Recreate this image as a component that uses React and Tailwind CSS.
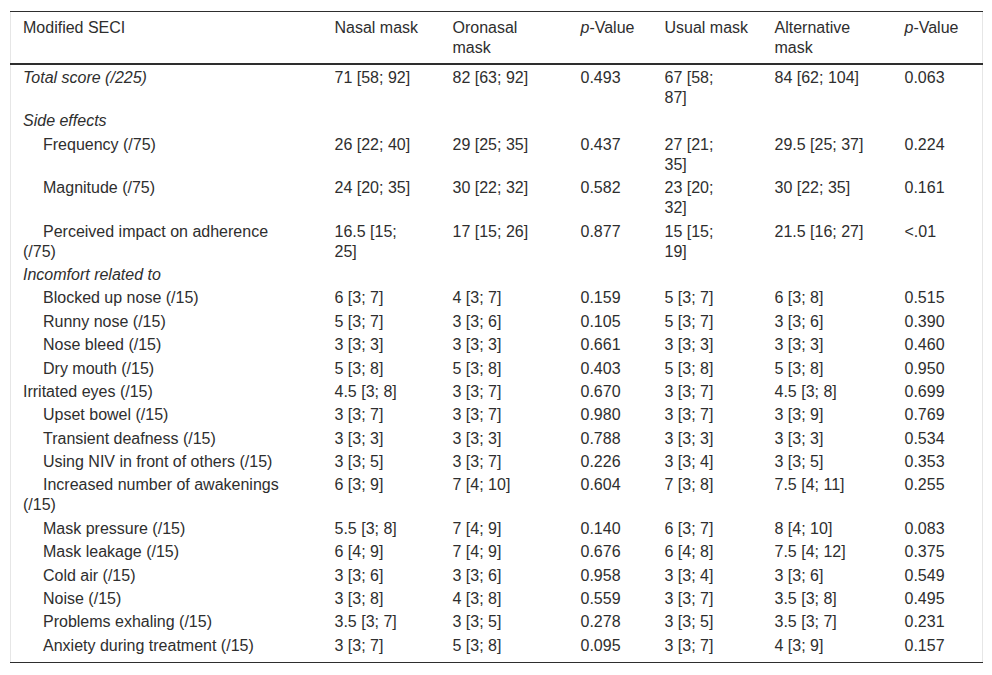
import React from "react";

const rows = [
  { label: "Total score (/225)", italic: true, v: ["71 [58; 92]", "82 [63; 92]", "0.493", "67 [58; 87]", "84 [62; 104]", "0.063"] },
  { label: "Side effects", italic: true, v: ["", "", "", "", "", ""] },
  { label: "Frequency (/75)", sub: true, v: ["26 [22; 40]", "29 [25; 35]", "0.437", "27 [21; 35]", "29.5 [25; 37]", "0.224"] },
  { label: "Magnitude (/75)", sub: true, v: ["24 [20; 35]", "30 [22; 32]", "0.582", "23 [20; 32]", "30 [22; 35]", "0.161"] },
  { label: "Perceived impact on adherence (/75)", sub: true, v: ["16.5 [15; 25]", "17 [15; 26]", "0.877", "15 [15; 19]", "21.5 [16; 27]", "<.01"] },
  { label: "Incomfort related to", italic: true, v: ["", "", "", "", "", ""] },
  { label: "Blocked up nose (/15)", sub: true, v: ["6 [3; 7]", "4 [3; 7]", "0.159", "5 [3; 7]", "6 [3; 8]", "0.515"] },
  { label: "Runny nose (/15)", sub: true, v: ["5 [3; 7]", "3 [3; 6]", "0.105", "5 [3; 7]", "3 [3; 6]", "0.390"] },
  { label: "Nose bleed (/15)", sub: true, v: ["3 [3; 3]", "3 [3; 3]", "0.661", "3 [3; 3]", "3 [3; 3]", "0.460"] },
  { label: "Dry mouth (/15)", sub: true, v: ["5 [3; 8]", "5 [3; 8]", "0.403", "5 [3; 8]", "5 [3; 8]", "0.950"] },
  { label: "Irritated eyes (/15)", v: ["4.5 [3; 8]", "3 [3; 7]", "0.670", "3 [3; 7]", "4.5 [3; 8]", "0.699"] },
  { label: "Upset bowel (/15)", sub: true, v: ["3 [3; 7]", "3 [3; 7]", "0.980", "3 [3; 7]", "3 [3; 9]", "0.769"] },
  { label: "Transient deafness (/15)", sub: true, v: ["3 [3; 3]", "3 [3; 3]", "0.788", "3 [3; 3]", "3 [3; 3]", "0.534"] },
  { label: "Using NIV in front of others (/15)", sub: true, v: ["3 [3; 5]", "3 [3; 7]", "0.226", "3 [3; 4]", "3 [3; 5]", "0.353"] },
  { label: "Increased number of awakenings (/15)", sub: true, v: ["6 [3; 9]", "7 [4; 10]", "0.604", "7 [3; 8]", "7.5 [4; 11]", "0.255"] },
  { label: "Mask pressure (/15)", sub: true, v: ["5.5 [3; 8]", "7 [4; 9]", "0.140", "6 [3; 7]", "8 [4; 10]", "0.083"] },
  { label: "Mask leakage (/15)", sub: true, v: ["6 [4; 9]", "7 [4; 9]", "0.676", "6 [4; 8]", "7.5 [4; 12]", "0.375"] },
  { label: "Cold air (/15)", sub: true, v: ["3 [3; 6]", "3 [3; 6]", "0.958", "3 [3; 4]", "3 [3; 6]", "0.549"] },
  { label: "Noise (/15)", sub: true, v: ["3 [3; 8]", "4 [3; 8]", "0.559", "3 [3; 7]", "3.5 [3; 8]", "0.495"] },
  { label: "Problems exhaling (/15)", sub: true, v: ["3.5 [3; 7]", "3 [3; 5]", "0.278", "3 [3; 5]", "3.5 [3; 7]", "0.231"] },
  { label: "Anxiety during treatment (/15)", sub: true, v: ["3 [3; 7]", "5 [3; 8]", "0.095", "3 [3; 7]", "4 [3; 9]", "0.157"] },
];

const PValue = () => (
  <>
    <i>p</i>-Value
  </>
);

export default function App() {
  return (
    <div className="bg-white px-[10px] pt-[11px] pb-[12px] font-['Liberation_Sans',Arial,sans-serif] text-[16px] text-[#2e2e2e]">
      <table className="w-[972px] table-fixed border-collapse border-x border-x-[#e6e6e6]">
        <colgroup>
          <col className="w-[312px]" />
          <col className="w-[118px]" />
          <col className="w-[128px]" />
          <col className="w-[84px]" />
          <col className="w-[110px]" />
          <col className="w-[130px]" />
          <col className="w-[90px]" />
        </colgroup>
        <thead>
          <tr className="border-t border-t-[#2e2e2e] border-b-2 border-b-[#2e2e2e] text-left align-top leading-5">
            <th className="px-3 pt-[6px] pb-[5px] font-normal">Modified SECI</th>
            <th className="px-3 pt-[6px] pb-[5px] font-normal">Nasal mask</th>
            <th className="px-3 pt-[6px] pb-[5px] font-normal">Oronasal mask</th>
            <th className="px-3 pt-[6px] pb-[5px] font-normal"><PValue /></th>
            <th className="px-3 pt-[6px] pb-[5px] font-normal">Usual mask</th>
            <th className="px-3 pt-[6px] pb-[5px] font-normal">Alternative mask</th>
            <th className="px-3 pt-[6px] pb-[5px] font-normal"><PValue /></th>
          </tr>
        </thead>
        <tbody className="border-b border-b-[#2e2e2e]">
          {rows.map((r, i) => {
            const pad = i === rows.length - 1 ? "pt-[3px] pb-[6px]" : "pt-[3px] pb-[0.4px]";
            return (
              <tr key={i} className="align-top leading-5">
                <td className={`pl-3 pr-7 ${pad} ${r.sub ? "indent-5" : ""} ${r.italic ? "italic" : ""}`}>
                  {r.label}
                </td>
                {r.v.map((c, j) => (
                  <td key={j} className={`pl-3 pr-7 ${pad}`}>
                    {c}
                  </td>
                ))}
              </tr>
            );
          })}
        </tbody>
      </table>
    </div>
  );
}
